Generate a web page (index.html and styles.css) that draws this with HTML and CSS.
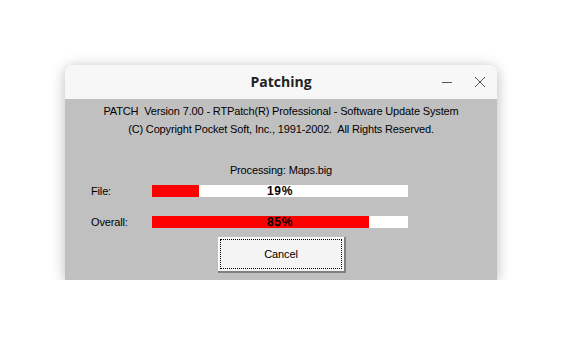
FILE: index.html
```html
<!DOCTYPE html>
<html>
<head>
<meta charset="utf-8">
<link rel="stylesheet" href="styles.css">
</head>
<body>
<div class="window">
  <div class="titlebar">
    <span class="title">Patching</span>
    <div class="controls">
      <svg class="ctl" width="12" height="12" viewBox="0 0 12 12"><path d="M1 6.5h10" stroke="#555" stroke-width="1"/></svg>
      <svg class="ctl" width="12" height="12" viewBox="0 0 12 12"><path d="M1 1l10 10M11 1L1 11" stroke="#555" stroke-width="1"/></svg>
    </div>
  </div>
  <div class="content">
    <div class="line l1">PATCH&nbsp; Version 7.00 - RTPatch(R) Professional - Software Update System</div>
    <div class="line l2">(C) Copyright Pocket Soft, Inc., 1991-2002.&nbsp; All Rights Reserved.</div>
    <div class="line proc">Processing: Maps.big</div>
    <div class="row file">
      <span class="label">File:</span>
      <div class="bar"><div class="fill" style="width:47px"></div><span class="pct">19%</span></div>
    </div>
    <div class="row overall">
      <span class="label">Overall:</span>
      <div class="bar"><div class="fill" style="width:217px"></div><span class="pct">85%</span></div>
    </div>
    <div class="btnrow"><button class="btn"><span class="focus">Cancel</span></button></div>
  </div>
</div>
</body>
</html>
```
FILE: styles.css
```css
html, body { margin: 0; padding: 0; background: #fff; }
body { padding: 65px 0 0 65px; font-family: "Liberation Sans", Arial, sans-serif; }
.window {
  width: 432px;
  height: 215px;
  display: flex;
  flex-direction: column;
  border-radius: 8px 8px 0 0;
  box-shadow: 0 2px 14px rgba(0,0,0,0.28);
  overflow: hidden;
}
.titlebar {
  height: 34px;
  background: #f7f7f7;
  position: relative;
  display: flex;
  align-items: center;
  justify-content: center;
}
.title { font-family: "Open Sans", "Noto Sans", sans-serif; font-weight: bold; font-size: 14px; color: #222; margin-top: -1px; }
.controls { position: absolute; right: 11px; top: 11px; display: flex; gap: 21px; }
.ctl { display: block; }
.content {
  flex: 1;
  background: #c0c0c0;
  display: flex;
  flex-direction: column;
  padding-top: 5px;
  font-size: 11px;
  letter-spacing: -0.15px;
  color: #000;
}
.line { text-align: center; height: 14px; line-height: 14px; }
.l2 { margin-top: 4px; }
.proc { margin-top: 27px; }
.row { display: flex; align-items: center; height: 12px; padding-left: 26px; }
.file { margin-top: 8px; }
.overall { margin-top: 19px; }
.label { width: 61px; line-height: 12px; }
.bar { width: 256px; height: 12px; background: #fff; position: relative; display: flex; justify-content: center; align-items: center; }
.fill { position: absolute; left: 0; top: 0; bottom: 0; background: #ff0000; }
.pct { position: relative; font-weight: bold; font-size: 12px; line-height: 12px; letter-spacing: 0.6px; }
.btnrow { margin-top: 9px; padding-left: 153px; }
.btn {
  width: 128px; height: 36px;
  background: #f4f4f4;
  border: none;
  border-right: 2px solid #808080;
  border-bottom: 2px solid #808080;
  box-shadow: inset 1px 1px 0 #fff;
  padding: 2px;
  display: flex;
  font-family: "Liberation Sans", Arial, sans-serif;
  font-size: 11px;
  letter-spacing: -0.15px;
  color: #000;
}
.focus { flex: 1; border: 1px dotted #000; display: flex; align-items: center; justify-content: center; }
```
